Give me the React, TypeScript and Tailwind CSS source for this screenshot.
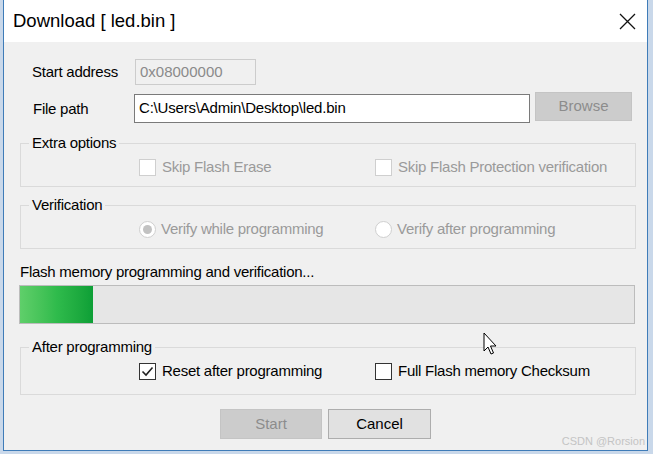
import React from 'react'

const font = { fontFamily: '"Liberation Sans", Arial, sans-serif' }

function CheckBox({ checked, disabled, label }: { checked?: boolean; disabled?: boolean; label: string }) {
  return (
    <div className="flex items-center gap-[6px]">
      <div
        className={`w-[17px] h-[17px] bg-white border flex items-center justify-center ${
          disabled ? 'border-[#cfcfcf]' : 'border-[#333333]'
        }`}
      >
        {checked && (
          <svg width="13" height="13" viewBox="0 0 13 13">
            <path d="M1.5 6.5 L5 10 L11.5 2.5" fill="none" stroke="#222" strokeWidth="1.6" />
          </svg>
        )}
      </div>
      <span className={`text-[15px] tracking-[-0.25px] ${disabled ? 'text-[#9a9a9a]' : 'text-black'}`}>{label}</span>
    </div>
  )
}

function Radio({ selected, label }: { selected?: boolean; label: string }) {
  return (
    <div className="flex items-center gap-[5px]">
      <div className="w-[17px] h-[17px] rounded-full bg-white border border-[#cfcfcf] flex items-center justify-center">
        {selected && <div className="w-[9px] h-[9px] rounded-full bg-[#c2c2c2]" />}
      </div>
      <span className="text-[15px] tracking-[-0.25px] text-[#9a9a9a]">{label}</span>
    </div>
  )
}

function Group({ title, height, children }: { title: string; height: string; children: React.ReactNode }) {
  return (
    <fieldset className={`ml-[16px] w-[616px] ${height} border border-[#dadada]`}>
      <legend className="ml-[8px] px-[3px] text-[15px] tracking-[-0.25px] leading-[18px] text-black">{title}</legend>
      {children}
    </fieldset>
  )
}

export default function App() {
  return (
    <div className="relative w-[653px] h-[454px] bg-[#c9d8ea] overflow-hidden" style={font}>
      <div className="ml-[3px] w-[645px] h-[451px] border border-[#3f7cb8] border-t-0 bg-[#f0f0f0] flex flex-col">
        {/* Title bar */}
        <div className="h-[42px] bg-white flex items-center justify-between pl-[9px] pr-[11px]">
          <span className="text-[18.5px] text-black">Download [ led.bin ]</span>
          <svg width="17" height="17" viewBox="0 0 17 17">
            <path d="M1 1 L16 16 M16 1 L1 16" stroke="#111" strokeWidth="1.3" />
          </svg>
        </div>

        {/* Start address */}
        <div className="mt-[17px] h-[26px] flex items-center">
          <span className="ml-[28px] w-[103px] text-[15px] tracking-[-0.25px] text-black">Start address</span>
          <div className="w-[121px] h-[26px] border border-[#cccccc] bg-[#f0f0f0] flex items-center pl-[4px] text-[15px] text-[#8a8a8a]">
            0x08000000
          </div>
        </div>

        {/* File path */}
        <div className="mt-[7px] h-[31px] flex items-start">
          <span className="ml-[29px] mt-[6px] w-[101px] text-[15px] tracking-[-0.25px] text-black">File path</span>
          <div className="mt-[2px] w-[396px] h-[29px] border border-[#7a7a7a] bg-white flex items-center pl-[4px] text-[15px] tracking-[-0.2px] text-black">
            C:\Users\Admin\Desktop\led.bin
          </div>
          <div className="ml-[5px] w-[97px] h-[29px] border border-[#c4c4c4] bg-[#cccccc] flex items-center justify-center text-[15px] text-[#8c8c8c]">
            Browse
          </div>
        </div>

        {/* Extra options */}
        <div className="mt-[11px]">
          <Group title="Extra options" height="h-[53px]">
            <div className="h-[30px] flex items-center">
              <div className="ml-[118px] w-[236px]">
                <CheckBox disabled label="Skip Flash Erase" />
              </div>
              <CheckBox disabled label="Skip Flash Protection verification" />
            </div>
          </Group>
        </div>

        {/* Verification */}
        <div className="mt-[9px]">
          <Group title="Verification" height="h-[53px]">
            <div className="h-[30px] flex items-center">
              <div className="ml-[118px] w-[236px]">
                <Radio selected label="Verify while programming" />
              </div>
              <Radio label="Verify after programming" />
            </div>
          </Group>
        </div>

        {/* Progress */}
        <div className="mt-[14px] ml-[16px] h-[18px] leading-[18px] text-[15px] tracking-[-0.25px] text-black">
          Flash memory programming and verification...
        </div>
        <div className="mt-[4px] ml-[15px] w-[616px] h-[39px] border border-[#bcbcbc] bg-[#e6e6e6]">
          <div className="w-[73px] h-full bg-gradient-to-r from-[#5fcf6a] via-[#2fbb4c] to-[#0c9f36]" />
        </div>

        {/* After programming */}
        <div className="mt-[14px]">
          <Group title="After programming" height="h-[57px]">
            <div className="h-[30px] flex items-center">
              <div className="ml-[118px] w-[236px]">
                <CheckBox checked label="Reset after programming" />
              </div>
              <CheckBox label="Full Flash memory Checksum" />
            </div>
          </Group>
        </div>

        {/* Buttons */}
        <div className="mt-[14px] ml-[216px] flex gap-[6px]">
          <div className="w-[102px] h-[30px] border border-[#c4c4c4] bg-[#cccccc] flex items-center justify-center text-[15px] text-[#8c8c8c]">
            Start
          </div>
          <div className="w-[103px] h-[30px] border border-[#adadad] bg-[#e1e1e1] flex items-center justify-center text-[15px] text-black">
            Cancel
          </div>
        </div>
      </div>

      {/* watermark */}
      <span className="absolute right-[8px] top-[433px] text-[11px] text-[#c4c4c4]">CSDN @Rorsion</span>

      {/* mouse cursor */}
      <svg className="absolute left-[483px] top-[332px]" width="16" height="26" viewBox="0 0 16 26">
        <path
          d="M1 1 L1 19 L5 15 L8 22 L10.5 21 L7.5 14 L13 14 Z"
          fill="#ffffff"
          stroke="#000"
          strokeWidth="1"
          strokeLinejoin="round"
        />
      </svg>
    </div>
  )
}
